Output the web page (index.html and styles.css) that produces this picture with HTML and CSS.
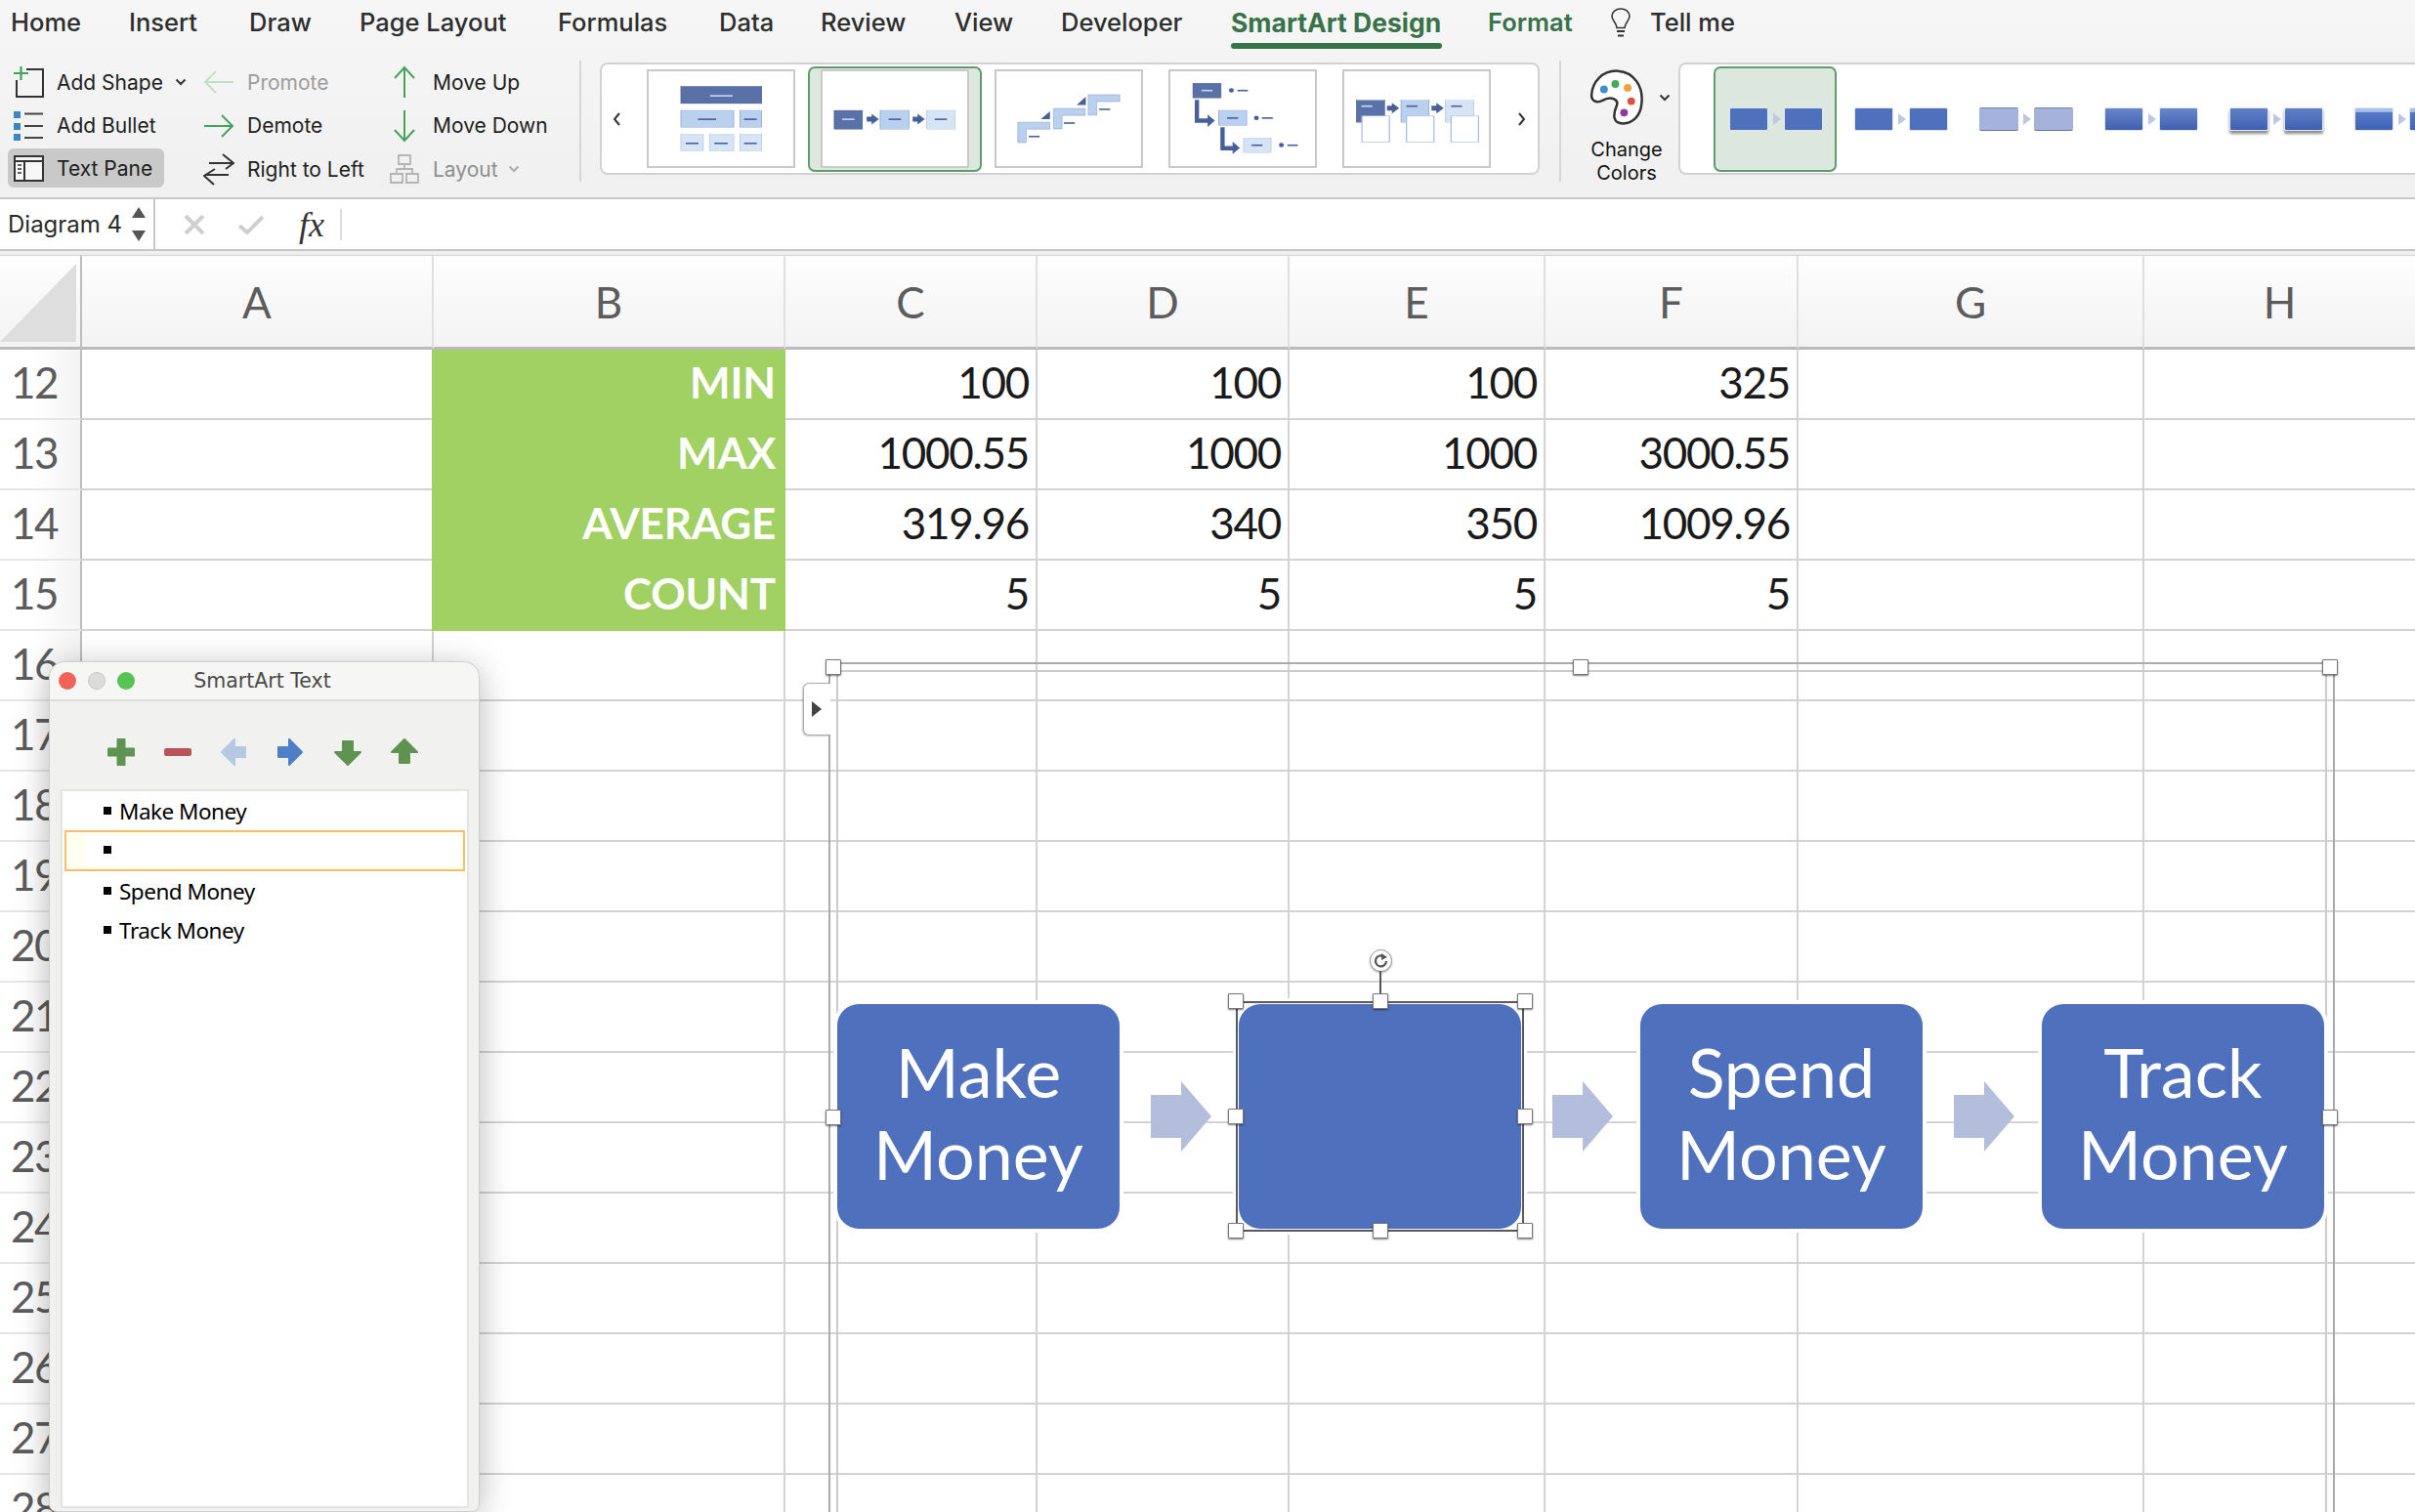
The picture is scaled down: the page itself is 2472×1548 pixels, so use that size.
FILE: index.html
```html
<!DOCTYPE html>
<html lang="en">
<head>
<meta charset="utf-8">
<title>SmartArt Design</title>
<link rel="stylesheet" href="styles.css">
</head>
<body>
<div class="app">
  <header class="ribbon">
    <nav class="tabs">
      <span class="tab t-home">Home</span>
      <span class="tab t-insert">Insert</span>
      <span class="tab t-draw">Draw</span>
      <span class="tab t-page">Page Layout</span>
      <span class="tab t-form">Formulas</span>
      <span class="tab t-data">Data</span>
      <span class="tab t-rev">Review</span>
      <span class="tab t-view">View</span>
      <span class="tab t-dev">Developer</span>
      <span class="tab t-sa active">SmartArt Design</span>
      <span class="tab t-fmt ctx">Format</span>
      <svg class="bulb" width="20" height="30" viewBox="0 0 20 30"><path d="M6 20.500C6 15.500 1 13.500 1 8.500C1 4 5 1 10 1S19 4 19 8.500C19 13.500 14 15.500 14 20.500Z" fill="none" stroke="#333" stroke-width="1.600"/><path d="M6 24H14M7 28.500H13" stroke="#333" stroke-width="1.800" fill="none"/></svg>
      <span class="tab t-tell">Tell me</span>
    </nav>
    <div class="tools-row">
      <div class="tools">
        <div class="tool c1">
          <svg class="ico" width="31" height="34" viewBox="0 0 31 34"><path d="M13 4H30V32H3V15" fill="none" stroke="#333" stroke-width="2"/><path d="M0 8H15M7.500 1V15" stroke="#3ea45a" stroke-width="2.200" fill="none"/></svg>
          <span>Add Shape</span>
          <svg class="chev" width="12" height="8" viewBox="0 0 12 8"><path d="M1.500 1.500L6 6L10.500 1.500" fill="none" stroke="#333" stroke-width="2"/></svg>
        </div>
        <div class="tool c2 dim">
          <svg class="ico" width="32" height="26" viewBox="0 0 32 26"><path d="M31 13H2M13 2L2 13L13 24" fill="none" stroke="#bfe0c5" stroke-width="2"/></svg>
          <span>Promote</span>
        </div>
        <div class="tool c3">
          <svg class="ico" width="24" height="34" viewBox="0 0 24 34"><path d="M12 33V2M2 13L12 2L22 13" fill="none" stroke="#44a45c" stroke-width="2"/></svg>
          <span>Move Up</span>
        </div>
        <div class="tool c1">
          <svg class="ico" width="31" height="30" viewBox="0 0 31 30"><path d="M0 0H7V7H0ZM0 12H7V19H0ZM0 23H7V30H0Z" fill="#3d86c6"/><path d="M11 2.500H30M11 15H30M11 27H30" stroke="#444" stroke-width="2" fill="none"/></svg>
          <span>Add Bullet</span>
        </div>
        <div class="tool c2">
          <svg class="ico" width="32" height="26" viewBox="0 0 32 26"><path d="M1 13H30M19 2L30 13L19 24" fill="none" stroke="#44a45c" stroke-width="2"/></svg>
          <span>Demote</span>
        </div>
        <div class="tool c3">
          <svg class="ico" width="24" height="34" viewBox="0 0 24 34"><path d="M12 1V32M2 21L12 32L22 21" fill="none" stroke="#44a45c" stroke-width="2"/></svg>
          <span>Move Down</span>
        </div>
        <div class="tool c1 pressed">
          <svg class="ico" width="31" height="27" viewBox="0 0 31 27"><path d="M1 1H30V26H1Z" fill="#f7f7f7" stroke="#333" stroke-width="2"/><path d="M1 6H30M11 6V26" stroke="#333" stroke-width="2" fill="none"/><path d="M4 10H8M4 14H8M4 18H8" stroke="#333" stroke-width="1.500" fill="none"/></svg>
          <span>Text Pane</span>
        </div>
        <div class="tool c2">
          <svg class="ico" width="32" height="34" viewBox="0 0 32 34"><path d="M6 11H30M20 2L31 11L23 17M26 23H2M12 17L1 24L11 33" fill="none" stroke="#333" stroke-width="2"/></svg>
          <span>Right to Left</span>
        </div>
        <div class="tool c3 gray">
          <svg class="ico" width="30" height="30" viewBox="0 0 30 30"><path d="M9 1H21V10H9ZM1 20H13V29H1ZM17 20H29V29H17ZM15 10V15M7 20V15H23V20" fill="none" stroke="#b4b4b4" stroke-width="1.800"/></svg>
          <span>Layout</span>
          <svg class="chev" width="12" height="8" viewBox="0 0 12 8"><path d="M1.500 1.500L6 6L10.500 1.500" fill="none" stroke="#aaa" stroke-width="2"/></svg>
        </div>
      </div>
      <div class="sep"></div>
      <div class="gallery layouts">
        <svg class="nav" width="10" height="16" viewBox="0 0 10 16"><path d="M8 2L3 8L8 14" fill="none" stroke="#333" stroke-width="2"/></svg>
        <div class="thumbs">
          <div class="thumb">
            <svg viewBox="97 97 238 303" preserveAspectRatio="none">
              <rect class="d" x="150" y="145" width="133" height="55"/><rect class="dl" x="198" y="173" width="37" height="5"/>
              <rect class="m" x="150" y="222" width="87" height="54"/><rect class="dd" x="178" y="248" width="30" height="5"/>
              <rect class="m" x="247" y="222" width="36" height="54"/><rect class="dd" x="254" y="248" width="21" height="5"/>
              <rect class="l" x="150" y="298" width="37" height="54"/><rect class="dd" x="158" y="325" width="21" height="5"/>
              <rect class="l" x="197" y="298" width="40" height="54"/><rect class="dd" x="205" y="325" width="22" height="5"/>
              <rect class="l" x="247" y="298" width="36" height="54"/><rect class="dd" x="254" y="325" width="21" height="5"/>
            </svg>
          </div>
          <div class="thumb-sel">
            <div class="thumb">
              <svg viewBox="378 97 236 303" preserveAspectRatio="none">
                <rect class="d" x="397" y="222" width="46" height="60"/><rect class="dl" x="410" y="248" width="20" height="5"/>
                <path class="ar" d="M450 242H458V233L470 250L458 267V258H450Z"/>
                <rect class="m" x="472" y="222" width="47" height="60"/><rect class="dd" x="486" y="248" width="20" height="5"/>
                <path class="ar" d="M525 242H533V233L545 250L533 267V258H525Z"/>
                <rect class="l" x="548" y="222" width="46" height="60"/><rect class="dd" x="561" y="248" width="20" height="5"/>
              </svg>
            </div>
          </div>
          <div class="thumb">
            <svg viewBox="655 97 238 303" preserveAspectRatio="none">
              <path class="m" d="M690 260H743V282H704V325H690Z"/><rect class="dd" x="708" y="303" width="18" height="5"/><path class="ar" d="M728 250L743 225V250Z"/>
              <path class="m" d="M749 216H801V238H763V281H749Z"/><rect class="dd" x="766" y="260" width="18" height="5"/><path class="ar" d="M787 205L802 178V205Z"/>
              <path class="m" d="M806 172H858V194H820V237H806Z"/><rect class="dd" x="824" y="216" width="18" height="5"/>
            </svg>
          </div>
          <div class="thumb">
            <svg viewBox="935 97 237 303" preserveAspectRatio="none">
              <rect class="d" x="972" y="135" width="46" height="47"/><rect class="dl" x="986" y="156" width="18" height="5"/><ellipse class="ar" cx="1035" cy="158" rx="4" ry="7"/><rect class="ar" x="1045" y="156" width="17" height="5"/>
              <path class="ar" d="M975 188H982V248H996V235L1008 255L996 275V262H975Z"/>
              <rect class="m" x="1014" y="222" width="46" height="48"/><rect class="dd" x="1028" y="244" width="18" height="5"/><ellipse class="ar" cx="1076" cy="246" rx="4" ry="7"/><rect class="ar" x="1085" y="244" width="18" height="5"/>
              <path class="ar" d="M1017 276H1024V336H1037V322L1049 342L1037 362V350H1017Z"/>
              <rect class="l" x="1055" y="310" width="45" height="47"/><rect class="dd" x="1068" y="331" width="18" height="5"/><ellipse class="ar" cx="1117" cy="333" rx="4" ry="7"/><rect class="ar" x="1127" y="331" width="17" height="5"/>
            </svg>
          </div>
          <div class="thumb">
            <svg viewBox="1214 97 237 303" preserveAspectRatio="none">
              <rect class="d" x="1234" y="190" width="46" height="70"/><rect class="dl" x="1242" y="206" width="18" height="5"/>
              <path class="ar" d="M1284 207H1292V198L1304 215L1292 232V223H1284Z"/>
              <rect class="m" x="1307" y="190" width="46" height="70"/><rect class="dd" x="1316" y="206" width="18" height="5"/>
              <path class="ar" d="M1357 207H1365V198L1377 215L1365 232V223H1357Z"/>
              <rect class="l" x="1380" y="190" width="46" height="70"/><rect class="dd" x="1389" y="206" width="18" height="5"/>
              <rect class="w" x="1243" y="240" width="45" height="83"/><rect class="w" x="1316" y="240" width="45" height="83"/><rect class="w" x="1389" y="240" width="45" height="83"/>
            </svg>
          </div>
        </div>
        <svg class="nav nav-next" width="10" height="16" viewBox="0 0 10 16"><path d="M2 2L7 8L2 14" fill="none" stroke="#333" stroke-width="2"/></svg>
      </div>
      <div class="sep sep2"></div>
      <div class="colors">
        <div class="colors-icon">
          <svg width="58" height="58" viewBox="75 92 110 178" preserveAspectRatio="none">
            <path d="M132 97C165 100 182 150 178 200C176 240 160 262 142 262C122 262 122 235 130 205C134 185 118 175 102 190C90 200 80 190 81 172C82 135 100 95 132 97Z" fill="#fff" stroke="#333" stroke-width="2.500" vector-effect="non-scaling-stroke"/>
            <ellipse cx="105" cy="155" rx="7.500" ry="12" fill="#3f8fd0"/><ellipse cx="127" cy="138" rx="7.500" ry="12" fill="#44aa5a"/><ellipse cx="151" cy="150" rx="7.500" ry="12" fill="#f0a040"/><ellipse cx="158" cy="192" rx="7.500" ry="12" fill="#e05040"/><ellipse cx="144" cy="228" rx="7.500" ry="12" fill="#8e3aa0"/>
          </svg>
          <svg class="chev" width="12" height="8" viewBox="0 0 12 8"><path d="M1.500 1.500L6 6L10.500 1.500" fill="none" stroke="#333" stroke-width="2"/></svg>
        </div>
        <div class="colors-label">Change<br>Colors</div>
      </div>
      <div class="gallery styles">
        <div class="sw-item selected"><i class="sw s1"></i><b class="mini"></b><i class="sw s1"></i></div>
        <div class="sw-item"><i class="sw s1"></i><b class="mini"></b><i class="sw s1"></i></div>
        <div class="sw-item"><i class="sw s3"></i><b class="mini"></b><i class="sw s3"></i></div>
        <div class="sw-item"><i class="sw s4"></i><b class="mini"></b><i class="sw s4"></i></div>
        <div class="sw-item"><i class="sw s5"></i><b class="mini"></b><i class="sw s5"></i></div>
        <div class="sw-item"><i class="sw s6"></i><b class="mini"></b><i class="sw s6"></i></div>
      </div>
    </div>
  </header>

  <div class="formula">
    <div class="namebox">
      <span>Diagram 4</span>
      <svg width="16" height="36" viewBox="0 0 16 36"><path d="M8 0L15 11H1ZM8 35L1 24H15Z" fill="#555"/></svg>
    </div>
    <div class="fx-btns">
      <svg width="22" height="20" viewBox="0 0 22 20"><path d="M2 1L20 19M20 1L2 19" stroke="#cfcfcf" stroke-width="4" fill="none"/></svg>
      <svg class="ok" width="28" height="20" viewBox="0 0 28 20"><path d="M2 11L10 18L26 2" stroke="#cfcfcf" stroke-width="4" fill="none"/></svg>
      <span class="fx">fx</span>
    </div>
  </div>
  <div class="formula-gap"></div>

  <main class="sheet">
    <div class="row head"><div class="corner"><svg width="78" height="80" viewBox="0 0 78 80"><path d="M78 0V80H0Z" fill="#dedede"/></svg></div><div>A</div><div>B</div><div>C</div><div>D</div><div>E</div><div>F</div><div>G</div><div>H</div></div>
    <div class="row"><div class="rh">12</div><div></div><div class="lbl">MIN</div><div>100</div><div>100</div><div>100</div><div>325</div><div></div><div></div></div>
    <div class="row"><div class="rh">13</div><div></div><div class="lbl">MAX</div><div>1000.55</div><div>1000</div><div>1000</div><div>3000.55</div><div></div><div></div></div>
    <div class="row"><div class="rh">14</div><div></div><div class="lbl">AVERAGE</div><div>319.96</div><div>340</div><div>350</div><div>1009.96</div><div></div><div></div></div>
    <div class="row"><div class="rh">15</div><div></div><div class="lbl">COUNT</div><div>5</div><div>5</div><div>5</div><div>5</div><div></div><div></div></div>
    <div class="row"><div class="rh">16</div><div></div><div></div><div></div><div></div><div></div><div></div><div></div><div></div></div>
    <div class="row"><div class="rh">17</div><div></div><div></div><div></div><div></div><div></div><div></div><div></div><div></div></div>
    <div class="row"><div class="rh">18</div><div></div><div></div><div></div><div></div><div></div><div></div><div></div><div></div></div>
    <div class="row"><div class="rh">19</div><div></div><div></div><div></div><div></div><div></div><div></div><div></div><div></div></div>
    <div class="row"><div class="rh">20</div><div></div><div></div><div></div><div></div><div></div><div></div><div></div><div></div></div>
    <div class="row"><div class="rh">21</div><div></div><div></div><div></div><div></div><div></div><div></div><div></div><div></div></div>
    <div class="row"><div class="rh">22</div><div></div><div></div><div></div><div></div><div></div><div></div><div></div><div></div></div>
    <div class="row"><div class="rh">23</div><div></div><div></div><div></div><div></div><div></div><div></div><div></div><div></div></div>
    <div class="row"><div class="rh">24</div><div></div><div></div><div></div><div></div><div></div><div></div><div></div><div></div></div>
    <div class="row"><div class="rh">25</div><div></div><div></div><div></div><div></div><div></div><div></div><div></div><div></div></div>
    <div class="row"><div class="rh">26</div><div></div><div></div><div></div><div></div><div></div><div></div><div></div><div></div></div>
    <div class="row"><div class="rh">27</div><div></div><div></div><div></div><div></div><div></div><div></div><div></div><div></div></div>
    <div class="row"><div class="rh">28</div><div></div><div></div><div></div><div></div><div></div><div></div><div></div><div></div></div>
  </main>
</div>

<section class="diagram">
  <div class="frame-inner"></div>
  <i class="h h-tl"></i><i class="h h-tm"></i><i class="h h-tr"></i><i class="h h-ml"></i><i class="h h-mr"></i>
  <div class="pane-tab"><svg width="10" height="16" viewBox="0 0 10 16"><path d="M0 0L10 8L0 16Z" fill="#444"/></svg></div>
  <div class="nodes">
    <div class="node">Make<br>Money</div>
    <svg class="arrow" width="62" height="72" viewBox="0 0 62 72"><path d="M0 14H31V0L62 36L31 72V58H0Z"/></svg>
    <div class="node sel">
      <div class="rot"><svg width="16" height="16" viewBox="0 0 16 16"><path d="M13 8A5.500 5.500 0 1 1 10 3" fill="none" stroke="#555" stroke-width="2.200"/><path d="M8 0L14 4L8 7Z" fill="#555"/></svg></div>
      <i class="h n-tl"></i><i class="h n-tm"></i><i class="h n-tr"></i><i class="h n-ml"></i><i class="h n-mr"></i><i class="h n-bl"></i><i class="h n-bm"></i><i class="h n-br"></i>
    </div>
    <svg class="arrow" width="62" height="72" viewBox="0 0 62 72"><path d="M0 14H31V0L62 36L31 72V58H0Z"/></svg>
    <div class="node">Spend<br>Money</div>
    <svg class="arrow" width="62" height="72" viewBox="0 0 62 72"><path d="M0 14H31V0L62 36L31 72V58H0Z"/></svg>
    <div class="node">Track<br>Money</div>
  </div>
</section>

<aside class="win">
  <div class="win-title">
    <i class="light red"></i><i class="light grey"></i><i class="light green"></i>
    <span>SmartArt Text</span>
  </div>
  <div class="win-tools">
    <svg width="28" height="28" viewBox="0 0 28 28"><path d="M10.500 1H17.500V10.500H27V17.500H17.500V27H10.500V17.500H1V10.500H10.500Z" fill="#5f9352" stroke="#5f9352" stroke-linejoin="round" stroke-width="2"/></svg>
    <svg width="28" height="28" viewBox="0 0 28 28"><rect y="10" width="28" height="8" rx="2" fill="#b95458"/></svg>
    <svg width="28" height="28" viewBox="0 0 28 28"><path d="M1 14L14 1V9H25V19H14V27Z" fill="#b5c8e4" stroke="#b5c8e4" stroke-linejoin="round" stroke-width="2"/></svg>
    <svg width="28" height="28" viewBox="0 0 28 28"><path d="M25 14L12 1V9H1V19H12V27Z" fill="#4f7fc6" stroke="#4f7fc6" stroke-linejoin="round" stroke-width="2"/></svg>
    <svg width="28" height="28" viewBox="0 0 28 28"><path d="M14 27L27 14H19V3H9V14H1Z" fill="#5f9352" stroke="#5f9352" stroke-linejoin="round" stroke-width="2"/></svg>
    <svg width="28" height="28" viewBox="0 0 28 28"><path d="M14 1L27 14H19V25H9V14H1Z" fill="#5f9352" stroke="#5f9352" stroke-linejoin="round" stroke-width="2"/></svg>
  </div>
  <div class="win-list">
    <div class="li li-first">Make Money</div>
    <div class="li li-edit"></div>
    <div class="li li-third">Spend Money</div>
    <div class="li">Track Money</div>
  </div>
</aside>
</body>
</html>
```

FILE: styles.css
```css
* { box-sizing: border-box; }
html, body { margin: 0; padding: 0; }
body {
  width: 2472px; height: 1548px; overflow: hidden; position: relative;
  background: #fff; color: #222;
  font-family: Inter, "Open Sans", sans-serif;
}
.app { display: flex; flex-direction: column; height: 1548px; }

/* ribbon */
.ribbon { height: 204px; flex: none; background: linear-gradient(#f6f6f6, #f0f0f0); border-bottom: 2px solid #c9c9c9; }
.tabs { height: 46px; margin-bottom: 4px; display: flex; align-items: center; padding-left: 11px; position: relative; }
.tab { font-size: 25.500px; font-weight: 500; color: #2e2e2e; white-space: nowrap; line-height: 46px; flex: none; }
.t-home { width: 121px; } .t-insert { width: 123px; } .t-draw { width: 113px; } .t-page { width: 203px; }
.t-form { width: 165px; } .t-data { width: 104px; } .t-rev { width: 137px; } .t-view { width: 109px; }
.t-dev { width: 174px; } .t-sa { width: 263px; } .t-fmt { width: 126px; }
.active { color: #37724a; font-weight: 700; font-size: 26.500px; position: relative; }
.active::after { content: ""; position: absolute; left: 0; width: 216px; bottom: -4px; height: 6px; background: #37724a; border-radius: 3px; }
.ctx { color: #37724a; font-weight: 600; }
.bulb { margin-right: 20px; flex: none; }

.tools-row { display: flex; align-items: flex-start; height: 152px; padding-top: 12px; padding-left: 8px; }
.tools { width: 585px; display: grid; grid-template-columns: 200px 191px 194px; grid-auto-rows: 44.500px; font-size: 21px; flex: none; }
.tool { display: flex; align-items: center; white-space: nowrap; color: #1e1e1e; position: relative; }
.tool .ico { flex: none; }
.c1 { padding-left: 6px; } .c1 .ico { margin-right: 13px; }
.c2 .ico { margin-right: 13px; }
.c3 .ico { margin: 0 17px 0 3px; }
.c3.gray .ico { margin: 0 14px 0 0; }
.dim span { color: #9c9c9c; } .gray span { color: #8e8e8e; }
.chev { margin-left: 12px; flex: none; }
.gray .chev { margin-left: 10px; }
.pressed { height: 40px; width: 160px; margin-top: 1px; background: #c9c9c9; border-radius: 6px; }
.sep { width: 2px; height: 124px; background: #d6d6d6; flex: none; }
.sep2 { margin-left: 20px; }

.gallery { height: 115px; margin-top: 2px; background: #fff; border: 2px solid #d2d2d2; border-radius: 8px; flex: none; }
.layouts { width: 962px; margin-left: 19px; display: flex; align-items: center; padding-left: 10px; }
.nav { flex: none; }
.nav-next { margin-left: 27px; }
.thumbs { display: flex; align-items: center; gap: 26px; margin-left: 26px; flex: none; }
.thumb { width: 152px; height: 101px; background: #fff; border: 2px solid #c9c9c9; flex: none; }
.thumb svg { display: block; width: 148px; height: 97px; }
.thumb-sel { width: 178px; height: 108px; margin: 0 -13px; background: #dce8de; border: 2px solid #5e9c6e; border-radius: 7px; display: flex; align-items: center; justify-content: center; flex: none; }
.d { fill: #5a71a8; stroke: #3f5690; stroke-width: 1; }
.m { fill: #b9d0ef; stroke: #7c94c4; stroke-width: 1; }
.l { fill: #d7e4f6; stroke: #a4bde0; stroke-width: 1; }
.dl { fill: #c9d8ef; } .dd { fill: #4a6098; } .ar { fill: #47609a; }
.w { fill: #fff; stroke: #a4bde0; stroke-width: 2; }

.colors { width: 120px; flex: none; display: flex; flex-direction: column; align-items: center; }
.colors-icon { height: 60px; display: flex; align-items: center; margin-left: 36px; width: 100px; margin-top: 8px; }
.colors-icon .chev { margin-left: 14px; }
.colors-label { font-size: 20px; line-height: 24px; text-align: center; color: #111; margin-top: 11px; margin-left: 14px; }
.styles { width: 800px; display: flex; align-items: center; gap: 2px; padding-left: 34px; border-right: 0; border-radius: 8px 0 0 8px; }
.sw-item { width: 126px; height: 108px; flex: none; display: flex; align-items: center; padding-left: 14px; border: 2px solid transparent; border-radius: 7px; }
.sw-item.selected { background: #dce8de; border-color: #5e9c6e; }
.sw { display: block; width: 40px; height: 24px; border-radius: 2px; flex: none; border: 1px solid #dfe6f3; }
.s1 { background: #4f71bd; }
.s3 { background: #a5b3dc; border: 0; border-top: 1px solid #7686b0; border-bottom: 1px solid #65749f; }
.s4 { background: linear-gradient(#6786c9, #3f60b0); }
.s5 { background: linear-gradient(#5f80c6, #3f60b0); box-shadow: 0 3px 3px rgba(0,0,0,.45); }
.s6 { background: linear-gradient(#a9c0ea 0, #a9c0ea 15%, #5578c6 20%, #3f64ba 100%); }
.mini { display: block; width: 0; height: 0; margin: 0 3px 0 5px; border-left: 8px solid #bcc7e2; border-top: 6px solid transparent; border-bottom: 6px solid transparent; flex: none; }

/* formula bar */
.formula { height: 53px; flex: none; display: flex; align-items: center; background: #fff; border-bottom: 2px solid #c6c6c6; }
.namebox { width: 159px; height: 51px; display: flex; align-items: center; padding-left: 8px; border-right: 2px solid #c9c9c9; flex: none; font-size: 24px; color: #2a2a2a; }
.namebox span { width: 126px; flex: none; white-space: nowrap; }
.fx-btns { display: flex; align-items: center; padding-left: 29px; height: 32px; }
.fx-btns .ok { margin-left: 33px; }
.fx { font-family: "Liberation Serif", serif; font-style: italic; font-size: 36px; margin-left: 35px; width: 44px; border-right: 2px solid #dcdcdc; color: #333; line-height: 32px; height: 32px; }
.formula-gap { height: 5px; flex: none; background: #efefef; border-bottom: 1px solid #d4d4d4; }

/* sheet */
.sheet { font-family: Lato, "Open Sans", sans-serif; flex: none; }
.row { display: grid; grid-template-columns: 84px 360px 360px 258px 258px 262px 259px 354px 277px; height: 72px; }
.row > div { border-right: 2px solid #d3d3d3; border-bottom: 2px solid #d3d3d3; font-size: 44px; text-align: right; padding-right: 7px; line-height: 66px; color: #1a1a1a; letter-spacing: -1.300px; white-space: nowrap; overflow: hidden; }
.row > div:last-child { border-right: 0; }
.row > .rh { background: linear-gradient(90deg, #fff 40%, #f4f4f4); border-right-color: #bdbdbd; border-bottom-color: #e6e6e6; color: #5c5c5c; text-align: center; padding-right: 12px; font-size: 44px; letter-spacing: -1.500px; overflow: visible; }
.row > .lbl { background: #a1d063; color: #fff; font-weight: 700; border-color: #a1d063; box-shadow: -2px 0 0 #a1d063; padding-right: 8px; letter-spacing: -.2px; }
.row.head { height: 96px; }
.row.head > div { background: linear-gradient(#fdfdfd, #f3f3f3); border-right-color: #e0e0e0; border-bottom: 3px solid #b9b9b9; text-align: center; padding: 0; color: #5c5c5c; line-height: 94px; letter-spacing: 0; }
.row.head > .corner { border-right-color: #bdbdbd; position: relative; }
.corner svg { position: absolute; left: 0; top: 8px; display: block; }

/* diagram overlay */
.diagram { position: absolute; left: 848px; top: 678px; width: 1542px; height: 900px; border: 2px solid #aaa; }
.frame-inner { position: absolute; left: 6px; top: 6px; right: 6px; bottom: 6px; border: 2px solid #ccc; }
.h { position: absolute; width: 16px; height: 16px; background: #fff; border: 1px solid #777; box-shadow: 0 1px 2px rgba(0,0,0,.5); border-radius: 1px; z-index: 3; }
.h-tl { left: -5px; top: -5px; } .h-tm { left: 760px; top: -5px; } .h-tr { right: -5px; top: -5px; }
.h-ml { left: -5px; top: 456px; } .h-mr { right: -5px; top: 456px; }
.pane-tab { position: absolute; left: -28px; top: 19px; width: 28px; height: 54px; background: #fff; border: 1px solid #aaa; border-right: 0; border-radius: 6px 0 0 6px; box-shadow: -1px 1px 2px rgba(0,0,0,.2); display: flex; align-items: center; justify-content: center; padding-right: 2px; }
.nodes { position: absolute; left: 7px; top: 348px; display: flex; align-items: center; gap: 28px; font-family: Lato, sans-serif; }
.node { width: 289px; height: 230px; flex: none; background: #4f71bd; border-radius: 22px; color: #fff; font-size: 70px; line-height: 84px; text-align: center; display: flex; align-items: center; justify-content: center; padding-bottom: 9px; box-shadow: 0 0 0 4px #fff; position: relative; }
.arrow { fill: #b3bedc; flex: none; margin-left: 4px; }
.node.sel { background: transparent; box-shadow: none; padding: 0; }
.node.sel::before { content: ""; position: absolute; inset: -3px; background: #fff; border: 2px solid #595959; box-shadow: 0 0 0 3px #fff; }
.node.sel::after { content: ""; position: absolute; inset: 0; background: #4f71bd; border-radius: 22px; }
.rot { position: absolute; z-index: 3; left: 134px; top: -56px; width: 23px; height: 23px; border-radius: 50%; background: #fff; border: 1px solid #999; box-shadow: 0 1px 2px rgba(0,0,0,.3); display: flex; align-items: center; justify-content: center; }
.rot::after { content: ""; position: absolute; left: 9px; top: 21px; width: 2px; height: 24px; background: #555; }
.n-tl { left: -11px; top: -11px; } .n-tm { left: 137px; top: -11px; } .n-tr { right: -12px; top: -11px; }
.n-ml { left: -11px; top: 107px; } .n-mr { right: -12px; top: 107px; }
.n-bl { left: -11px; bottom: -10px; } .n-bm { left: 137px; bottom: -10px; } .n-br { right: -12px; bottom: -10px; }

/* floating window */
.win { position: absolute; left: 50px; top: 677px; width: 441px; height: 871px; background: #f1f1ef; border: 1px solid #cfcfcf; border-radius: 16px 16px 8px 8px; box-shadow: 0 6px 34px rgba(0,0,0,.28); display: flex; flex-direction: column; }
.win-title { height: 40px; flex: none; background: #f6f6f4; border-bottom: 2px solid #dcdcdc; border-radius: 16px 16px 0 0; display: flex; align-items: center; justify-content: center; position: relative; font-family: "DejaVu Sans", sans-serif; font-size: 20.500px; color: #4a4a4a; padding-right: 4px; }
.light { position: absolute; top: 10px; width: 18px; height: 18px; border-radius: 50%; }
.red { left: 9px; background: #f0625a; } .grey { left: 39px; background: #dcdcda; border: 1px solid #c6c6c6; } .green { left: 69px; background: #57c354; }
.win-tools { height: 90px; flex: none; display: flex; align-items: center; padding: 14px 0 0 59px; gap: 30px; }
.win-list { flex: 1; margin: 0 10px 3px 11px; background: #fff; border: 2px solid #e4e4e4; font-size: 22.500px; color: #000; padding-top: 3px; font-family: "Noto Sans", sans-serif; letter-spacing: -.5px; }
.li { height: 40px; line-height: 40px; padding-left: 58px; position: relative; }
.li::before { content: ""; position: absolute; left: 42px; top: 15px; width: 8px; height: 8px; background: #000; }
.li-first { height: 37px; line-height: 36px; }
.li-first::before { top: 13px; }
.li-edit { height: 42px; margin: 0 2px; border: 2px solid #f5bd6c; background: #fffff0; }
.li-edit::before { left: 38px; top: 14px; z-index: 1; }
.li-edit::after { content: ""; position: absolute; left: 20px; right: 4px; top: 4px; bottom: 4px; background: #fff; }
.li-third { margin-top: 1px; }
```
